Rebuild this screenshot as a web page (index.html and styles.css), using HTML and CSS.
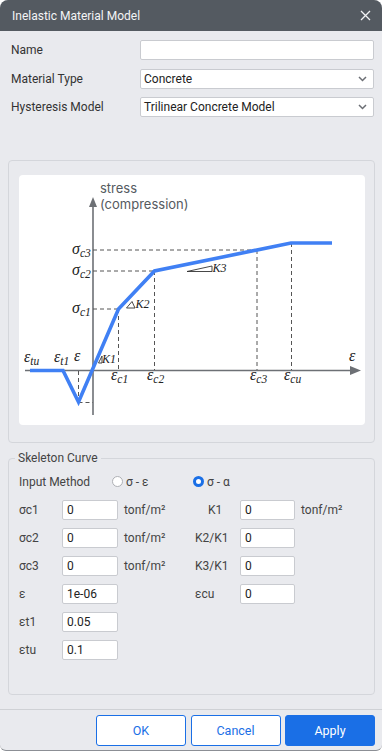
FILE: index.html
```html
<!DOCTYPE html>
<html>
<head>
<meta charset="utf-8">
<link rel="stylesheet" href="styles.css">
</head>
<body>
<div class="dialog">
  <header class="titlebar">
    <span class="title">Inelastic Material Model</span>
    <svg class="close" width="11" height="11" viewBox="0 0 11 11"><path d="M1 1L10 10M10 1L1 10" stroke="#f2f3f5" stroke-width="1.3" fill="none"/></svg>
  </header>
  <div class="content">
    <div class="form">
      <label class="flabel">Name</label>
      <div class="field"></div>
      <label class="flabel">Material Type</label>
      <div class="field select"><span>Concrete</span><svg width="9" height="6" viewBox="0 0 9 6"><path d="M1 1L4.5 4.5L8 1" stroke="#6b6e74" stroke-width="1.5" fill="none"/></svg></div>
      <label class="flabel">Hysteresis Model</label>
      <div class="field select"><span>Trilinear Concrete Model</span><svg width="9" height="6" viewBox="0 0 9 6"><path d="M1 1L4.5 4.5L8 1" stroke="#6b6e74" stroke-width="1.5" fill="none"/></svg></div>
    </div>

    <div class="chart-panel">
      <div class="chart-card">
        <svg width="346" height="250" viewBox="0 0 346 250" class="chart">
          <g class="axis">
            <line x1="74" y1="31" x2="74" y2="240"/>
            <polygon points="74,22 70,32 78,32" class="arrow"/>
            <line x1="6" y1="195.5" x2="332" y2="195.5"/>
            <polygon points="342,195.5 331,191 331,200" class="arrow"/>
          </g>
          <g class="dash">
            <line x1="74" y1="75" x2="238" y2="75"/>
            <line x1="74" y1="96" x2="135" y2="96"/>
            <line x1="74" y1="134" x2="99" y2="134"/>
            <line x1="99.5" y1="134" x2="99.5" y2="195"/>
            <line x1="135.5" y1="96" x2="135.5" y2="195"/>
            <line x1="238" y1="75" x2="238" y2="195"/>
            <line x1="272.5" y1="68" x2="272.5" y2="195"/>
            <line x1="59.5" y1="196" x2="59.5" y2="227"/>
            <line x1="59.5" y1="227.5" x2="74" y2="227.5"/>
          </g>
          <polyline class="curve" points="11,195.5 44,195.5 59.5,227 99.5,134 135.5,96 272,68 313,68"/>
          <text class="axis-label" x="81" y="18">stress</text>
          <text class="axis-label" x="81" y="34">(compression)</text>

          <text class="math" x="53" y="79">σ<tspan class="sub" dy="3">c3</tspan></text>
          <text class="math" x="53" y="100">σ<tspan class="sub" dy="3">c2</tspan></text>
          <text class="math" x="53" y="138">σ<tspan class="sub" dy="3">c1</tspan></text>

          <text class="math" x="5" y="187">ε<tspan class="sub" dy="3">tu</tspan></text>
          <text class="math" x="35" y="187">ε<tspan class="sub" dy="3">t1</tspan></text>
          <text class="math" x="55" y="186">ε</text>
          <text class="math" x="330" y="186">ε</text>

          <text class="math" x="92" y="205">ε<tspan class="sub" dy="3">c1</tspan></text>
          <text class="math" x="128" y="205">ε<tspan class="sub" dy="3">c2</tspan></text>
          <text class="math" x="231" y="205">ε<tspan class="sub" dy="3">c3</tspan></text>
          <text class="math" x="265" y="205">ε<tspan class="sub" dy="3">cu</tspan></text>

          <polygon class="tri" points="79.5,188 83,181 83,188"/>
          <text class="k" x="83" y="188">K1</text>
          <polygon class="tri" points="107.5,133 113,126.5 116,133"/>
          <text class="k" x="116.5" y="133">K2</text>
          <polygon class="tri" points="168,96.5 193,91 193,96.5"/>
          <text class="k" x="193.5" y="97">K3</text>
        </svg>
      </div>
    </div>

    <fieldset class="skeleton">
      <legend>Skeleton Curve</legend>
      <div class="method">
        <span class="method-label">Input Method</span>
        <span class="radio"><span class="dot"></span>σ - ε</span>
        <span class="radio checked"><span class="dot"></span>σ - α</span>
      </div>
      <div class="params">
        <span class="plabel">σc1</span><div class="pin">0</div><span class="unit">tonf/m²</span>
        <span class="plabel plabel-k1">K1</span><div class="pin">0</div><span class="unit">tonf/m²</span>

        <span class="plabel">σc2</span><div class="pin">0</div><span class="unit">tonf/m²</span>
        <span class="plabel">K2/K1</span><div class="pin">0</div><span class="unit"></span>

        <span class="plabel">σc3</span><div class="pin">0</div><span class="unit">tonf/m²</span>
        <span class="plabel">K3/K1</span><div class="pin">0</div><span class="unit"></span>

        <span class="plabel">ε</span><div class="pin">1e-06</div><span class="unit"></span>
        <span class="plabel">εcu</span><div class="pin">0</div><span class="unit"></span>

        <span class="plabel">εt1</span><div class="pin">0.05</div><span class="unit"></span>
        <span></span><span></span><span></span>

        <span class="plabel">εtu</span><div class="pin">0.1</div><span class="unit"></span>
        <span></span><span></span><span></span>
      </div>
    </fieldset>
  </div>
  <footer class="footer">
    <button class="btn">OK</button>
    <button class="btn">Cancel</button>
    <button class="btn primary">Apply</button>
  </footer>
</div>
</body>
</html>
```

FILE: styles.css
```css
html, body {
  margin: 0;
  padding: 0;
  background: #ffffff;
}
body {
  font-family: Roboto, "Noto Sans", "Liberation Sans", sans-serif;
  font-size: 12px;
  color: #333;
}
.dialog {
  width: 382px;
  height: 751px;
  background: #e9eaee;
  border-radius: 8px 8px 6px 6px;
  overflow: hidden;
  display: flex;
  flex-direction: column;
  box-sizing: border-box;
  border-bottom: 1px solid #8c8f95;
}
.titlebar {
  height: 31px;
  flex: none;
  background: #545a61;
  display: flex;
  align-items: center;
  justify-content: space-between;
  padding: 0 11px 0 12px;
}
.title {
  color: #f3f4f6;
  font-size: 12px;
}
.close { display: block; }
.content {
  flex: 1;
  display: flex;
  flex-direction: column;
}
.form {
  display: grid;
  grid-template-columns: 129px 234px;
  row-gap: 8.5px;
  padding: 9px 0 0 11px;
  align-items: center;
}
.flabel {
  font-size: 12px;
  color: #333;
}
.field {
  height: 20px;
  box-sizing: border-box;
  background: #fff;
  border: 1px solid #c9cbd0;
  border-radius: 2px;
}
.select {
  display: flex;
  align-items: center;
  justify-content: space-between;
  padding: 0 6px 0 3px;
  color: #222;
}
.select svg { display: block; }
.chart-panel {
  margin: 43px 0 0 8px;
  width: 367px;
  box-sizing: border-box;
  border: 1px solid #d4d6db;
  border-radius: 4px;
  padding: 14px 9px 17px 10px;
}
.chart-card {
  width: 346px;
  height: 250px;
  background: #fff;
  border-radius: 4px;
}
.chart { display: block; }
.axis line { stroke: #6d7075; stroke-width: 1.6; }
.arrow { fill: #6d7075; }
.dash line { stroke: #555; stroke-width: 1; stroke-dasharray: 4 3; }
.curve { fill: none; stroke: #4080f4; stroke-width: 3.6; stroke-linejoin: miter; }
.axis-label {
  font-family: Inter, "Noto Sans", sans-serif;
  font-size: 13px;
  fill: #555a60;
}
.math {
  font-family: "Liberation Serif", "DejaVu Serif", serif;
  font-style: italic;
  font-size: 16px;
  fill: #222;
}
.sub { font-size: 11.5px; }
.k {
  font-family: "Liberation Serif", "DejaVu Serif", serif;
  font-style: italic;
  font-size: 12px;
  fill: #222;
}
.tri { fill: none; stroke: #333; stroke-width: 0.9; }

.skeleton {
  margin: 8px 0 0 8px;
  width: 367px;
  box-sizing: border-box;
  border: 1px solid #d4d6db;
  border-radius: 4px;
  padding: 6px 10px 34px 10px;
  min-width: 0;
}
.skeleton legend {
  padding: 0 3px;
  margin-left: -4px;
  font-size: 12px;
  line-height: 14px;
  color: #444;
}
.method {
  height: 21px;
  display: flex;
  align-items: center;
  color: #444;
}
.method-label { width: 93px; }
.radio {
  display: flex;
  align-items: center;
  gap: 3px;
  width: 81px;
}
.dot {
  width: 11px;
  height: 11px;
  box-sizing: border-box;
  border-radius: 50%;
  border: 1px solid #aeb0b5;
  background: #fff;
}
.checked .dot {
  border: 3px solid #1a6fe6;
}
.params {
  margin-top: 8px;
  display: grid;
  grid-template-columns: 43px 56px 77px 45px 55px auto;
  grid-auto-rows: 20px;
  row-gap: 8px;
  align-items: center;
  color: #444;
}
.plabel { color: #444; }
.plabel-k1 { padding-left: 13px; }
.pin {
  height: 20px;
  box-sizing: border-box;
  background: #fff;
  border: 1px solid #c9cbd0;
  border-radius: 2px;
  padding: 0 4px;
  line-height: 18px;
  color: #222;
}
.unit { padding-left: 6px; color: #444; }
.footer {
  margin-top: 10px;
  border-top: 1px solid #cfd1d5;
  display: flex;
  justify-content: flex-end;
  gap: 4.5px;
  padding: 5px 7px 0 0;
  height: 41px;
  box-sizing: border-box;
}
.btn {
  width: 90px;
  height: 31px;
  font-family: Roboto, "Noto Sans", sans-serif;
  font-size: 12.5px;
  border-radius: 3px;
  border: 1px solid #1a6fe6;
  background: #fff;
  color: #1a6fe6;
}
.btn.primary {
  background: #1a6fe6;
  color: #fff;
}
```
